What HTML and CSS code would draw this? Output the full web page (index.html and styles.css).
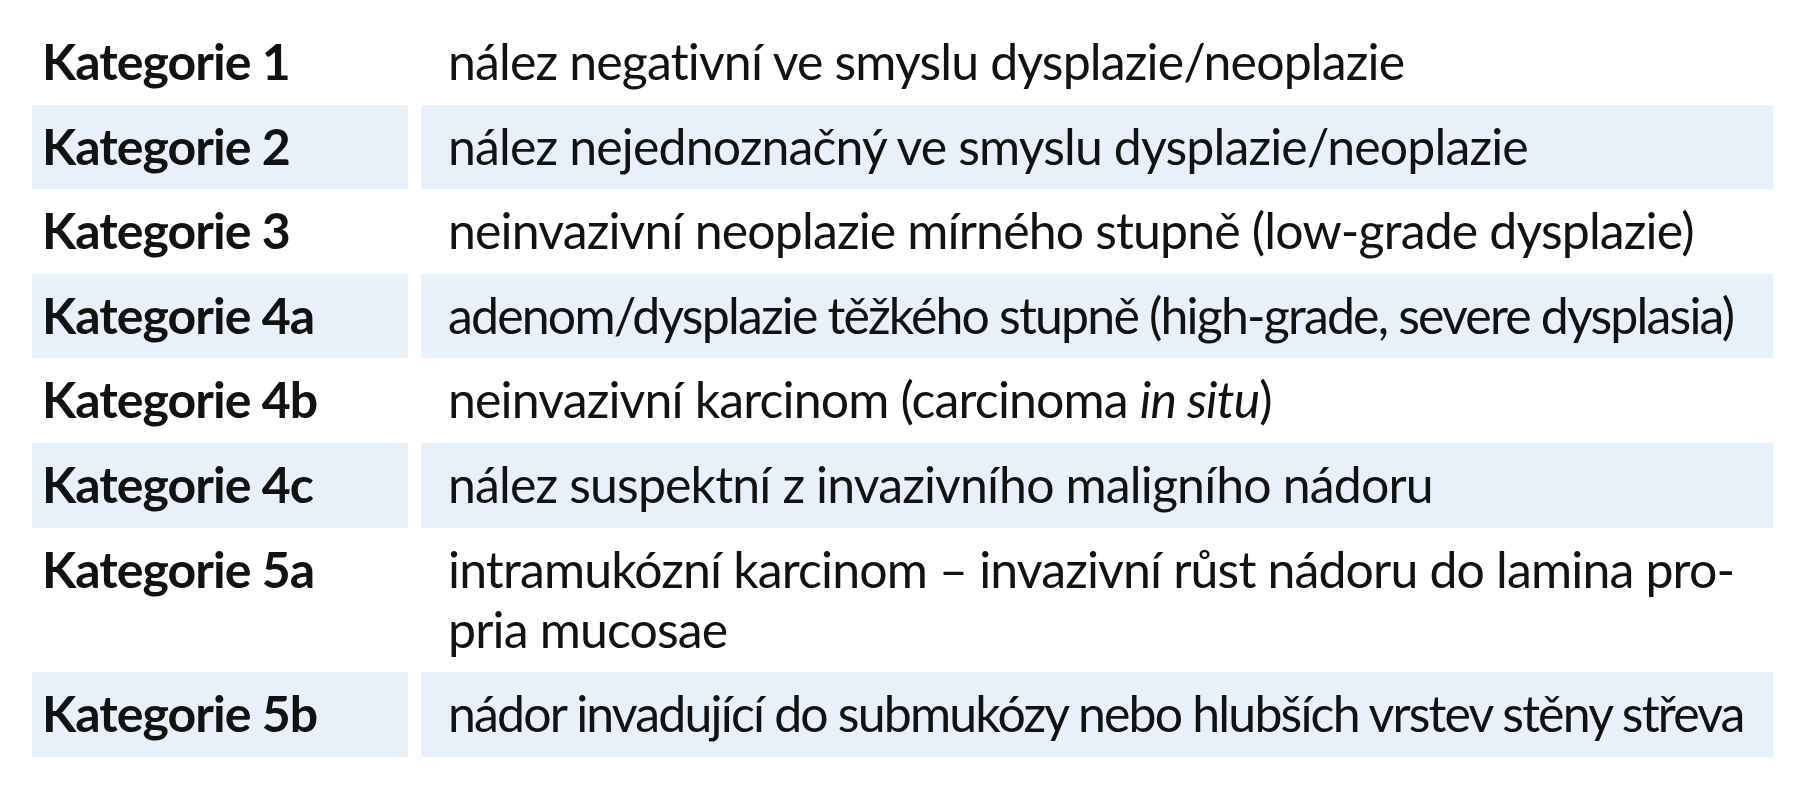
FILE: index.html
```html
<!DOCTYPE html>
<html lang="cs">
<head>
<meta charset="utf-8">
<title>Kategorie</title>
<link rel="stylesheet" href="styles.css">
</head>
<body>
<div class="table">
  <div class="row">
    <div class="cell cat">Kategorie 1</div>
    <div class="cell desc">nález negativní ve smyslu dysplazie/neoplazie</div>
  </div>
  <div class="row shaded">
    <div class="cell cat">Kategorie 2</div>
    <div class="cell desc">nález nejednoznačný ve smyslu dysplazie/neoplazie</div>
  </div>
  <div class="row">
    <div class="cell cat">Kategorie 3</div>
    <div class="cell desc">neinvazivní neoplazie mírného stupně (low-grade dysplazie)</div>
  </div>
  <div class="row shaded">
    <div class="cell cat">Kategorie 4a</div>
    <div class="cell desc tight">adenom/dysplazie těžkého stupně (high-grade, severe dysplasia)</div>
  </div>
  <div class="row">
    <div class="cell cat">Kategorie 4b</div>
    <div class="cell desc">neinvazivní karcinom (carcinoma <em>in situ</em>)</div>
  </div>
  <div class="row shaded">
    <div class="cell cat">Kategorie 4c</div>
    <div class="cell desc">nález suspektní z invazivního maligního nádoru</div>
  </div>
  <div class="row">
    <div class="cell cat">Kategorie 5a</div>
    <div class="cell desc">intramukózní karcinom – invazivní růst nádoru do lamina pro-<br>pria mucosae</div>
  </div>
  <div class="row shaded">
    <div class="cell cat">Kategorie 5b</div>
    <div class="cell desc tight">nádor invadující do submukózy nebo hlubších vrstev stěny střeva</div>
  </div>
</div>
</body>
</html>
```

FILE: styles.css
```css
html, body {
  margin: 0;
  padding: 0;
  background: #ffffff;
}

body {
  padding: 20px 0 0 32px;
  font-family: "Lato", "Noto Sans", sans-serif;
  font-size: 50px;
  line-height: 60px;
  letter-spacing: -0.85px;
  color: #121212;
}

.table {
  display: grid;
  grid-template-columns: 376px 1352px;
  column-gap: 13px;
  width: max-content;
}

.row {
  display: contents;
}

.cell {
  padding: 11px 0 13.6px 0;
  white-space: nowrap;
}

.cat {
  padding-left: 10px;
  font-weight: 700;
  letter-spacing: -0.95px;
}

.desc {
  padding-left: 27px;
}

.desc.tight {
  letter-spacing: -1.82px;
}

.desc em {
  font-style: italic;
}

.shaded .cell {
  background: #e8f1fa;
}
```
